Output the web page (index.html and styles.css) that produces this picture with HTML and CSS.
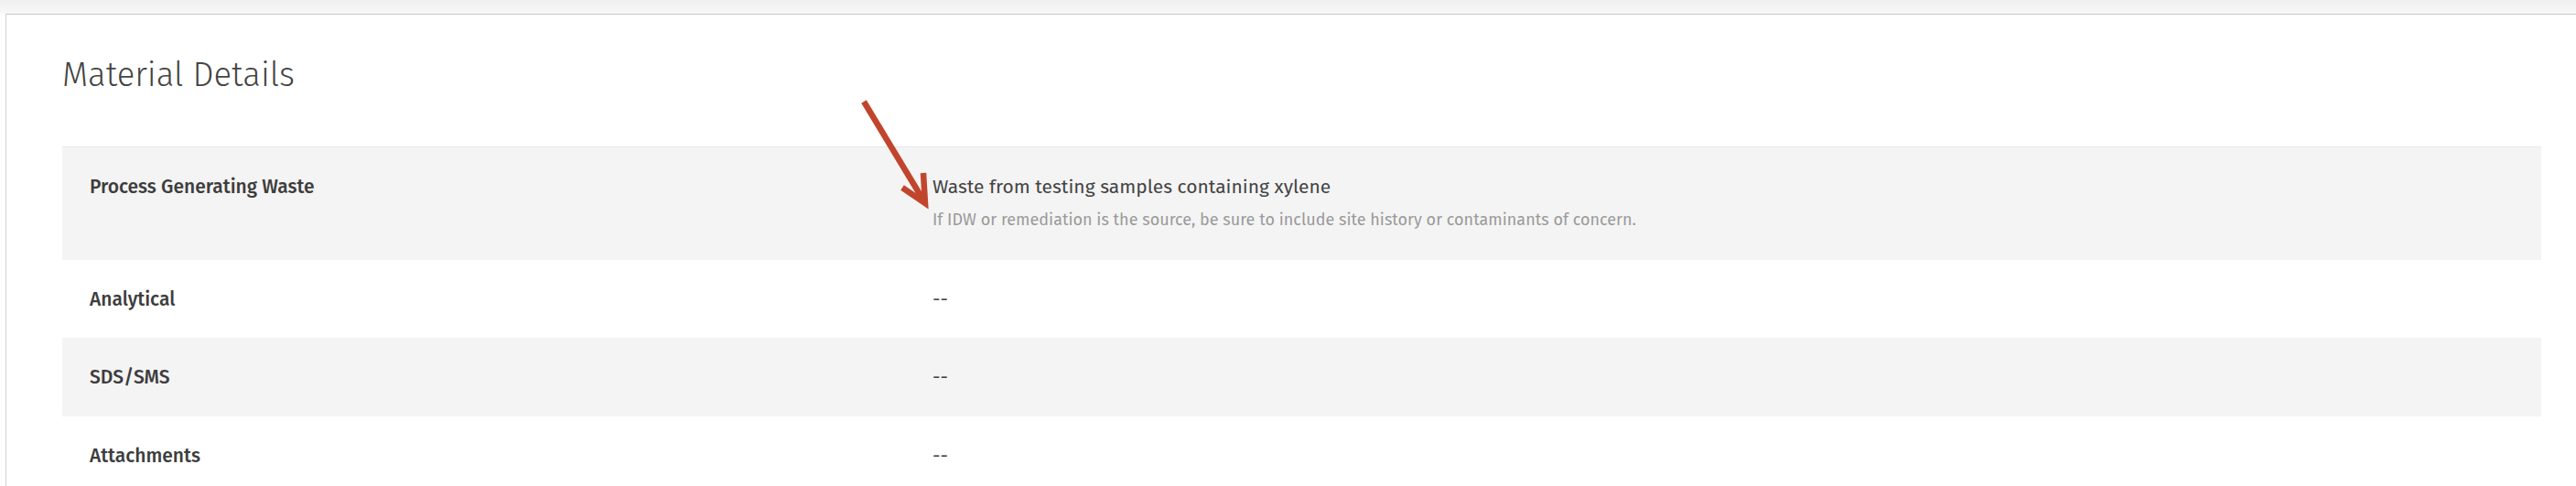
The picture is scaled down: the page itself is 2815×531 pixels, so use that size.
FILE: index.html
```html
<!DOCTYPE html>
<html lang="en">
<head>
<meta charset="utf-8">
<title>Material Details</title>
<link rel="stylesheet" href="styles.css">
</head>
<body>
<div class="page">
  <div class="topband"></div>
  <section class="card">
    <h2 class="card-title">Material Details</h2>
    <div class="details">
      <div class="row shaded">
        <div class="label">Process Generating Waste</div>
        <div class="value">
          <div class="value-text">Waste from testing samples containing xylene</div>
          <div class="help">If IDW or remediation is the source, be sure to include site history or contaminants of concern.</div>
        </div>
      </div>
      <div class="row">
        <div class="label">Analytical</div>
        <div class="value"><div class="value-text">--</div></div>
      </div>
      <div class="row shaded">
        <div class="label">SDS/SMS</div>
        <div class="value"><div class="value-text">--</div></div>
      </div>
      <div class="row">
        <div class="label">Attachments</div>
        <div class="value"><div class="value-text">--</div></div>
      </div>
    </div>
  </section>
  <svg class="annotation-arrow" width="100" height="140" viewBox="930 100 100 140" aria-hidden="true">
    <line x1="944" y1="111" x2="1008" y2="217" stroke="#c1452d" stroke-width="6.5" stroke-linecap="butt"/>
    <polyline points="986,205 1011,222 1009,189" fill="none" stroke="#c1452d" stroke-width="6.5" stroke-linejoin="miter" stroke-miterlimit="10"/>
  </svg>
</div>
</body>
</html>
```
FILE: styles.css
```css
html, body {
  margin: 0;
  padding: 0;
  background: #ffffff;
  overflow: hidden;
}
body {
  font-family: "Fira Sans", "Open Sans", "Liberation Sans", sans-serif;
  color: #444444;
}
.page {
  position: relative;
  height: 531px;
  overflow: hidden;
}
.topband {
  height: 15px;
  background: linear-gradient(#efefef, #f8f8f8);
}
.card {
  margin-left: 6px;
  border-top: 1px solid #cbcbcb;
  border-left: 1px solid #d2d2d2;
  padding: 45px 38px 0 61px;
  background: #ffffff;
}
.card-title {
  margin: 0;
  font-size: 36.5px;
  font-weight: 300;
  line-height: 1.2;
  color: #444444;
}
.details {
  margin-top: 55px;
  border-top: 1px solid #e8e8e8;
}
.row {
  display: grid;
  grid-template-columns: 951px 1fr;
  padding: 28px 0 26px 0;
}
.row.shaded {
  background: #f4f4f4;
}
.row:first-child {
  padding-bottom: 28.5px;
}
.label {
  padding-left: 30px;
  font-size: 21px;
  font-weight: 500;
  line-height: 31.5px;
  color: #3d3d3d;
}
.value-text {
  font-size: 21px;
  font-weight: 400;
  line-height: 31.5px;
  color: #444444;
}
.help {
  margin-top: 5px;
  font-size: 18px;
  line-height: 30px;
  color: #9a9a9a;
}
.annotation-arrow {
  position: absolute;
  left: 930px;
  top: 100px;
}
```
